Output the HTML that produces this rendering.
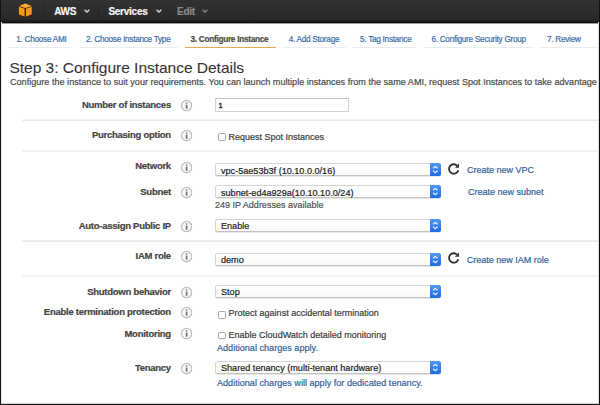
<!DOCTYPE html>
<html><head><meta charset="utf-8"><style>
*{margin:0;padding:0;box-sizing:border-box}
html,body{width:600px;height:405px;overflow:hidden;background:#fff}
body{position:relative;font-family:"Liberation Sans",sans-serif}
.t{position:absolute;white-space:nowrap;-webkit-text-stroke:0.2px currentColor}
#hdr{position:absolute;left:0;top:0;width:600px;height:24px;background:linear-gradient(#323232,#2a2a2a 19px,#222 21px,#141414 22px,#141414 23px,#9a9a9a 23px)}
.sep{position:absolute;top:4px;width:1px;height:13px;background:#262626}
.chev{position:absolute;width:4px;height:4px;border-right:1.4px solid #ddd;border-bottom:1.4px solid #ddd;transform:rotate(45deg)}
.ul{position:absolute}
.hr{position:absolute;left:22px;width:576px;height:2px;background:linear-gradient(#f4f4f4 50%,#ededed 50%)}
.info{position:absolute;width:11.4px;height:11.4px;border:1px solid #c4c4c4;border-radius:50%;background:#fafafa}
.info i{position:absolute;left:4.4px;top:1.6px;width:1.4px;height:1.4px;background:#666;border-radius:50%}
.info b{position:absolute;left:4.4px;top:3.8px;width:1.4px;height:4px;background:#555}
.inp{position:absolute;border:1px solid #d2d2d2;border-top-color:#c4c4c4;background:#fff}
.cb{position:absolute;width:7.9px;height:7.8px;border:1px solid #a9a9a9;border-radius:1.8px;background:#fff;box-shadow:0 0.5px 0.5px rgba(0,0,0,.08)}
.sel{position:absolute;border:1px solid #d4d4d4;border-top-color:#d6d6d6;border-bottom-color:#c2c2c2;border-radius:2.5px;background:linear-gradient(#fff,#fafafa);box-shadow:0 0.5px 0.8px rgba(0,0,0,.10)}
.stp{position:absolute;right:-1px;top:-1px;bottom:-1px;width:10.5px;border-radius:0 2.5px 2.5px 0;background:linear-gradient(#4f98f4,#1a6de6)}
</style></head>
<body>
<div id="hdr"></div>
<svg style="position:absolute;left:18.2px;top:3.2px" width="14.6" height="14.6" viewBox="-0.3 -0.3 14.6 14.6">
<path d="M7 0 L13.8 2.8 L13.8 11.3 L7 14 L0.2 11.3 L0.2 2.8 Z" fill="#f79a14" stroke="#1e1408" stroke-width="0.6" stroke-linejoin="round"/>
<path d="M7 0.3 L13.5 2.9 L7 5.2 L0.5 2.9 Z" fill="#f6ac3a"/>
<path d="M0.5 3 L7 5.2 L13.5 3" fill="none" stroke="#3a2208" stroke-width="0.8"/>
<path d="M7 5.2 L7 14" stroke="#2a1404" stroke-width="1.3"/>
</svg>
<div class="sep" style="left:44px"></div>
<div class="t" style="left:54.20px;top:6.83px;font-size:10px;line-height:10px;color:#f4f4f4;font-weight:bold;letter-spacing:-0.25px">AWS</div>
<svg style="position:absolute;left:84px;top:9.3px" width="6" height="4" viewBox="0 0 6 4"><path d="M0.6 0.7 L3 3 L5.4 0.7" fill="none" stroke="#dcdcdc" stroke-width="1.3"/></svg>
<div class="sep" style="left:98px"></div>
<div class="t" style="left:108.40px;top:6.83px;font-size:10px;line-height:10px;color:#f4f4f4;font-weight:bold;letter-spacing:-0.25px">Services</div>
<svg style="position:absolute;left:156px;top:9.4px" width="6" height="4" viewBox="0 0 6 4"><path d="M0.6 0.7 L3 3 L5.4 0.7" fill="none" stroke="#dcdcdc" stroke-width="1.3"/></svg>
<div class="sep" style="left:170px;opacity:.5"></div>
<div class="t" style="left:177.00px;top:6.83px;font-size:10px;line-height:10px;color:#8a8a8a;font-weight:bold;letter-spacing:-0.25px">Edit</div>
<svg style="position:absolute;left:202px;top:9.4px" width="6" height="4" viewBox="0 0 6 4"><path d="M0.6 0.7 L3 3 L5.4 0.7" fill="none" stroke="#8a8a8a" stroke-width="1.3"/></svg>
<div class="ul" style="left:9px;width:64px;top:46.90px;height:1.2px;background:#ececec"></div>
<div class="t" style="left:16.20px;top:36.46px;font-size:8.2px;line-height:8.2px;color:#3b6eaa;font-weight:normal;letter-spacing:-0.26px">1. Choose AMI</div>
<div class="ul" style="left:80px;width:98px;top:46.90px;height:1.2px;background:#ececec"></div>
<div class="t" style="left:86.00px;top:36.46px;font-size:8.2px;line-height:8.2px;color:#3b6eaa;font-weight:normal;letter-spacing:-0.26px">2. Choose Instance Type</div>
<div class="ul" style="left:184.5px;width:91.0px;top:46.70px;height:1.6px;background:#eaa850"></div>
<div class="t" style="left:190.50px;top:36.46px;font-size:8.2px;line-height:8.2px;color:#4a4a4a;font-weight:bold;letter-spacing:-0.26px">3. Configure Instance</div>
<div class="ul" style="left:282px;width:64px;top:46.90px;height:1.2px;background:#ececec"></div>
<div class="t" style="left:288.70px;top:36.46px;font-size:8.2px;line-height:8.2px;color:#3b6eaa;font-weight:normal;letter-spacing:-0.26px">4. Add Storage</div>
<div class="ul" style="left:353.4px;width:64.0px;top:46.90px;height:1.2px;background:#ececec"></div>
<div class="t" style="left:360.00px;top:36.46px;font-size:8.2px;line-height:8.2px;color:#3b6eaa;font-weight:normal;letter-spacing:-0.26px">5. Tag Instance</div>
<div class="ul" style="left:424px;width:110px;top:46.90px;height:1.2px;background:#ececec"></div>
<div class="t" style="left:431.40px;top:36.46px;font-size:8.2px;line-height:8.2px;color:#3b6eaa;font-weight:normal;letter-spacing:-0.26px">6. Configure Security Group</div>
<div class="ul" style="left:540px;width:57.5px;top:46.90px;height:1.2px;background:#ececec"></div>
<div class="t" style="left:547.00px;top:36.46px;font-size:8.2px;line-height:8.2px;color:#3b6eaa;font-weight:normal;letter-spacing:-0.26px">7. Review</div>
<div class="t" style="left:9.50px;top:59.84px;font-size:15.55px;line-height:15.55px;color:#363636;font-weight:normal;-webkit-text-stroke:0.1px #363636;letter-spacing:-0.04px">Step 3: Configure Instance Details</div>
<div class="t" style="left:10.00px;top:78.20px;font-size:9.1px;line-height:9.1px;color:#4a4a4a;font-weight:normal;">Configure the instance to suit your requirements. You can launch multiple instances from the same AMI, request Spot Instances to take advantage</div>
<div class="hr" style="top:119px;background:linear-gradient(#f2f2f2 50%,#e9e9e9 50%)"></div>
<div class="hr" style="top:150px;background:linear-gradient(#f4f4f4 50%,#efefef 50%)"></div>
<div class="hr" style="top:240px;background:linear-gradient(#f1f1f1 50%,#ebebeb 50%)"></div>
<div class="hr" style="top:275px;background:linear-gradient(#f5f5f5 50%,#f1f1f1 50%)"></div>
<div class="t" style="right:429.10px;top:99.86px;font-size:9.5px;line-height:9.5px;color:#444;font-weight:bold;letter-spacing:-0.26px">Number of instances</div>
<svg style="position:absolute;left:180px;top:98.70px" width="13.2" height="13.2" viewBox="0 0 13.2 13.2"><circle cx="6.6" cy="6.6" r="5.1" fill="#fafafa" stroke="#c0c0c0" stroke-width="1.25"/><circle cx="6.6" cy="3.9" r="0.9" fill="#8c8c8c"/><rect x="5.75" y="5.4" width="1.7" height="4.3" rx="0.3" fill="#707070"/></svg>
<div class="t" style="right:429.10px;top:130.46px;font-size:9.5px;line-height:9.5px;color:#444;font-weight:bold;letter-spacing:-0.26px">Purchasing option</div>
<svg style="position:absolute;left:180px;top:129.10px" width="13.2" height="13.2" viewBox="0 0 13.2 13.2"><circle cx="6.6" cy="6.6" r="5.1" fill="#fafafa" stroke="#c0c0c0" stroke-width="1.25"/><circle cx="6.6" cy="3.9" r="0.9" fill="#8c8c8c"/><rect x="5.75" y="5.4" width="1.7" height="4.3" rx="0.3" fill="#707070"/></svg>
<div class="t" style="right:429.10px;top:161.46px;font-size:9.5px;line-height:9.5px;color:#444;font-weight:bold;letter-spacing:-0.26px">Network</div>
<svg style="position:absolute;left:180px;top:160.70px" width="13.2" height="13.2" viewBox="0 0 13.2 13.2"><circle cx="6.6" cy="6.6" r="5.1" fill="#fafafa" stroke="#c0c0c0" stroke-width="1.25"/><circle cx="6.6" cy="3.9" r="0.9" fill="#8c8c8c"/><rect x="5.75" y="5.4" width="1.7" height="4.3" rx="0.3" fill="#707070"/></svg>
<div class="t" style="right:429.10px;top:187.16px;font-size:9.5px;line-height:9.5px;color:#444;font-weight:bold;letter-spacing:-0.26px">Subnet</div>
<svg style="position:absolute;left:180px;top:186.10px" width="13.2" height="13.2" viewBox="0 0 13.2 13.2"><circle cx="6.6" cy="6.6" r="5.1" fill="#fafafa" stroke="#c0c0c0" stroke-width="1.25"/><circle cx="6.6" cy="3.9" r="0.9" fill="#8c8c8c"/><rect x="5.75" y="5.4" width="1.7" height="4.3" rx="0.3" fill="#707070"/></svg>
<div class="t" style="right:429.10px;top:221.46px;font-size:9.5px;line-height:9.5px;color:#444;font-weight:bold;letter-spacing:-0.26px">Auto-assign Public IP</div>
<svg style="position:absolute;left:180px;top:220.40px" width="13.2" height="13.2" viewBox="0 0 13.2 13.2"><circle cx="6.6" cy="6.6" r="5.1" fill="#fafafa" stroke="#c0c0c0" stroke-width="1.25"/><circle cx="6.6" cy="3.9" r="0.9" fill="#8c8c8c"/><rect x="5.75" y="5.4" width="1.7" height="4.3" rx="0.3" fill="#707070"/></svg>
<div class="t" style="right:429.10px;top:251.46px;font-size:9.5px;line-height:9.5px;color:#444;font-weight:bold;letter-spacing:-0.26px">IAM role</div>
<svg style="position:absolute;left:180px;top:250.00px" width="13.2" height="13.2" viewBox="0 0 13.2 13.2"><circle cx="6.6" cy="6.6" r="5.1" fill="#fafafa" stroke="#c0c0c0" stroke-width="1.25"/><circle cx="6.6" cy="3.9" r="0.9" fill="#8c8c8c"/><rect x="5.75" y="5.4" width="1.7" height="4.3" rx="0.3" fill="#707070"/></svg>
<div class="t" style="right:429.10px;top:286.96px;font-size:9.5px;line-height:9.5px;color:#444;font-weight:bold;letter-spacing:-0.26px">Shutdown behavior</div>
<svg style="position:absolute;left:180px;top:285.80px" width="13.2" height="13.2" viewBox="0 0 13.2 13.2"><circle cx="6.6" cy="6.6" r="5.1" fill="#fafafa" stroke="#c0c0c0" stroke-width="1.25"/><circle cx="6.6" cy="3.9" r="0.9" fill="#8c8c8c"/><rect x="5.75" y="5.4" width="1.7" height="4.3" rx="0.3" fill="#707070"/></svg>
<div class="t" style="right:429.10px;top:307.46px;font-size:9.5px;line-height:9.5px;color:#444;font-weight:bold;letter-spacing:-0.26px">Enable termination protection</div>
<svg style="position:absolute;left:180px;top:306.30px" width="13.2" height="13.2" viewBox="0 0 13.2 13.2"><circle cx="6.6" cy="6.6" r="5.1" fill="#fafafa" stroke="#c0c0c0" stroke-width="1.25"/><circle cx="6.6" cy="3.9" r="0.9" fill="#8c8c8c"/><rect x="5.75" y="5.4" width="1.7" height="4.3" rx="0.3" fill="#707070"/></svg>
<div class="t" style="right:429.10px;top:329.16px;font-size:9.5px;line-height:9.5px;color:#444;font-weight:bold;letter-spacing:-0.26px">Monitoring</div>
<svg style="position:absolute;left:180px;top:327.20px" width="13.2" height="13.2" viewBox="0 0 13.2 13.2"><circle cx="6.6" cy="6.6" r="5.1" fill="#fafafa" stroke="#c0c0c0" stroke-width="1.25"/><circle cx="6.6" cy="3.9" r="0.9" fill="#8c8c8c"/><rect x="5.75" y="5.4" width="1.7" height="4.3" rx="0.3" fill="#707070"/></svg>
<div class="t" style="right:429.10px;top:363.46px;font-size:9.5px;line-height:9.5px;color:#444;font-weight:bold;letter-spacing:-0.26px">Tenancy</div>
<svg style="position:absolute;left:180px;top:362.00px" width="13.2" height="13.2" viewBox="0 0 13.2 13.2"><circle cx="6.6" cy="6.6" r="5.1" fill="#fafafa" stroke="#c0c0c0" stroke-width="1.25"/><circle cx="6.6" cy="3.9" r="0.9" fill="#8c8c8c"/><rect x="5.75" y="5.4" width="1.7" height="4.3" rx="0.3" fill="#707070"/></svg>
<div class="inp" style="left:215.2px;top:98.1px;width:133.6px;height:13.9px"></div>
<div class="t" style="left:218.40px;top:101.84px;font-size:7.4px;line-height:7.4px;color:#222;font-weight:normal;-webkit-text-stroke:0.35px #222">1</div>
<div class="cb" style="left:218px;top:133px"></div>
<div class="t" style="left:228.50px;top:132.58px;font-size:9px;line-height:9px;color:#3c3c3c;font-weight:normal;">Request Spot Instances</div>
<div class="cb" style="left:218px;top:310.8px"></div>
<div class="t" style="left:228.60px;top:309.48px;font-size:9px;line-height:9px;color:#3c3c3c;font-weight:normal;">Protect against accidental termination</div>
<div class="cb" style="left:218px;top:331.5px"></div>
<div class="t" style="left:228.60px;top:330.68px;font-size:9px;line-height:9px;color:#3c3c3c;font-weight:normal;">Enable CloudWatch detailed monitoring</div>
<div class="sel" style="left:215px;top:163.3px;width:225.5px;height:12.70px"><span class="stp"><svg width="10.5" height="13" viewBox="0 0 10.5 13" style="position:absolute;left:0;top:50%;margin-top:-6.5px"><path d="M3.1 5.3 L5.3 3.3 L7.5 5.3 M3.1 7.7 L5.3 9.7 L7.5 7.7" fill="none" stroke="#eaf3ff" stroke-width="1.15"/></svg></span></div>
<div class="t" style="left:221.00px;top:167.00px;font-size:9.1px;line-height:9.1px;color:#222;font-weight:normal;">vpc-5ae53b3f (10.10.0.0/16)</div>
<div class="sel" style="left:215px;top:184.7px;width:225.5px;height:13.30px"><span class="stp"><svg width="10.5" height="13" viewBox="0 0 10.5 13" style="position:absolute;left:0;top:50%;margin-top:-6.5px"><path d="M3.1 5.3 L5.3 3.3 L7.5 5.3 M3.1 7.7 L5.3 9.7 L7.5 7.7" fill="none" stroke="#eaf3ff" stroke-width="1.15"/></svg></span></div>
<div class="t" style="left:221.00px;top:188.50px;font-size:9.1px;line-height:9.1px;color:#222;font-weight:normal;">subnet-ed4a929a(10.10.10.0/24)</div>
<div class="t" style="left:215.00px;top:201.08px;font-size:9px;line-height:9px;color:#525252;font-weight:normal;">249 IP Addresses available</div>
<div class="sel" style="left:215px;top:219.4px;width:225.5px;height:12.30px"><span class="stp"><svg width="10.5" height="13" viewBox="0 0 10.5 13" style="position:absolute;left:0;top:50%;margin-top:-6.5px"><path d="M3.1 5.3 L5.3 3.3 L7.5 5.3 M3.1 7.7 L5.3 9.7 L7.5 7.7" fill="none" stroke="#eaf3ff" stroke-width="1.15"/></svg></span></div>
<div class="t" style="left:221.00px;top:221.80px;font-size:9.1px;line-height:9.1px;color:#222;font-weight:normal;">Enable</div>
<div class="sel" style="left:215px;top:253.2px;width:225.5px;height:12.80px"><span class="stp"><svg width="10.5" height="13" viewBox="0 0 10.5 13" style="position:absolute;left:0;top:50%;margin-top:-6.5px"><path d="M3.1 5.3 L5.3 3.3 L7.5 5.3 M3.1 7.7 L5.3 9.7 L7.5 7.7" fill="none" stroke="#eaf3ff" stroke-width="1.15"/></svg></span></div>
<div class="t" style="left:221.00px;top:256.40px;font-size:9.1px;line-height:9.1px;color:#222;font-weight:normal;">demo</div>
<div class="sel" style="left:215px;top:285px;width:225.5px;height:12.70px"><span class="stp"><svg width="10.5" height="13" viewBox="0 0 10.5 13" style="position:absolute;left:0;top:50%;margin-top:-6.5px"><path d="M3.1 5.3 L5.3 3.3 L7.5 5.3 M3.1 7.7 L5.3 9.7 L7.5 7.7" fill="none" stroke="#eaf3ff" stroke-width="1.15"/></svg></span></div>
<div class="t" style="left:221.00px;top:288.00px;font-size:9.1px;line-height:9.1px;color:#222;font-weight:normal;">Stop</div>
<div class="sel" style="left:215px;top:361px;width:225.5px;height:13.00px"><span class="stp"><svg width="10.5" height="13" viewBox="0 0 10.5 13" style="position:absolute;left:0;top:50%;margin-top:-6.5px"><path d="M3.1 5.3 L5.3 3.3 L7.5 5.3 M3.1 7.7 L5.3 9.7 L7.5 7.7" fill="none" stroke="#eaf3ff" stroke-width="1.15"/></svg></span></div>
<div class="t" style="left:221.00px;top:364.00px;font-size:9.1px;line-height:9.1px;color:#222;font-weight:normal;">Shared tenancy (multi-tenant hardware)</div>
<svg style="position:absolute;left:447.5px;top:163px" width="12" height="12" viewBox="0 0 12 12">
<path d="M10.32 7.2 A4.7 4.7 0 1 1 9.0 2.5" fill="none" stroke="#2e2e2e" stroke-width="1.8"/>
<path d="M11.0 0.5 L11.0 4.8 L6.9 4.8 Z" fill="#2e2e2e"/></svg>
<svg style="position:absolute;left:447.5px;top:252.4px" width="12" height="12" viewBox="0 0 12 12">
<path d="M10.32 7.2 A4.7 4.7 0 1 1 9.0 2.5" fill="none" stroke="#2e2e2e" stroke-width="1.8"/>
<path d="M11.0 0.5 L11.0 4.8 L6.9 4.8 Z" fill="#2e2e2e"/></svg>
<div class="t" style="left:467.00px;top:166.08px;font-size:9px;line-height:9px;color:#34629c;font-weight:normal;">Create new VPC</div>
<div class="t" style="left:468.00px;top:187.78px;font-size:9px;line-height:9px;color:#34629c;font-weight:normal;">Create new subnet</div>
<div class="t" style="left:466.70px;top:255.88px;font-size:9px;line-height:9px;color:#34629c;font-weight:normal;">Create new IAM role</div>
<div class="t" style="left:217.00px;top:344.00px;font-size:9.1px;line-height:9.1px;color:#34629c;font-weight:normal;">Additional charges apply.</div>
<div class="t" style="left:217.00px;top:379.00px;font-size:9.1px;line-height:9.1px;color:#34629c;font-weight:normal;">Additional charges will apply for dedicated tenancy.</div>
<div style="position:absolute;left:0;top:0;width:1px;height:405px;background:#111"></div>
<div style="position:absolute;left:1px;top:22px;width:1px;height:383px;background:#e8e8e8"></div>
<div style="position:absolute;left:599px;top:0;width:1px;height:405px;background:#111"></div>
<div style="position:absolute;left:598px;top:22px;width:1px;height:383px;background:#dcdcdc"></div>
<div style="position:absolute;left:0;top:404px;width:600px;height:1px;background:#111"></div>
<div style="position:absolute;left:1px;top:403px;width:598px;height:1px;background:#d4d4d4"></div>
</body></html>
